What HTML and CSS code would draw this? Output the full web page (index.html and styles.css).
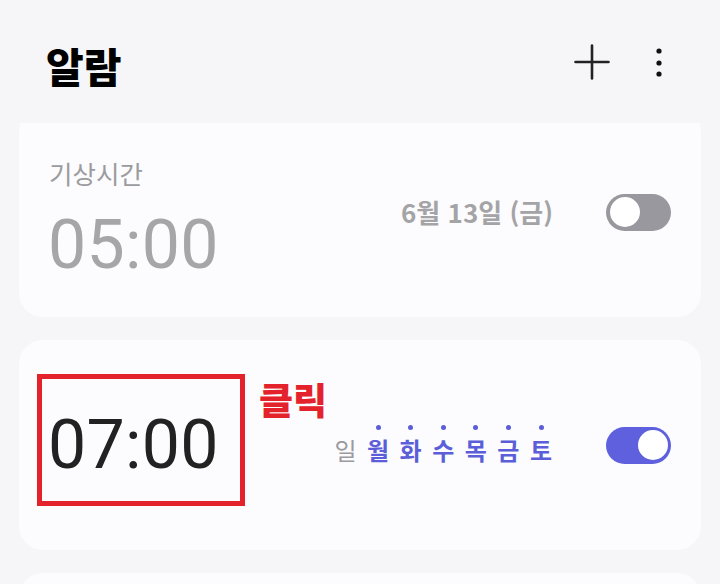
FILE: index.html
```html
<!DOCTYPE html>
<html lang="ko">
<head>
<meta charset="utf-8">
<title>알람</title>
<link rel="stylesheet" href="styles.css">
</head>
<body>
<div class="app">
  <header class="top">
    <h1 class="title">알람</h1>
    <div class="actions">
      <svg class="icon-plus" width="36" height="36" viewBox="0 0 36 36" aria-label="추가">
        <path d="M18 1.5V34.5M1.5 18H34.5" stroke="#222" stroke-width="2.6" stroke-linecap="round" fill="none"/>
      </svg>
      <svg class="icon-more" width="24" height="32" viewBox="0 0 24 32" aria-label="더보기">
        <circle cx="12" cy="5" r="2.6" fill="#111"/>
        <circle cx="12" cy="17" r="2.6" fill="#111"/>
        <circle cx="12" cy="28" r="2.6" fill="#111"/>
      </svg>
    </div>
  </header>
  <main class="list">
    <div class="list-inner">
      <section class="card card-off">
        <div class="info">
          <div class="label">기상시간</div>
          <div class="time muted">05:00</div>
        </div>
        <div class="side">
          <div class="date">6월 13일 (금)</div>
          <div class="toggle off"><span class="knob"></span></div>
        </div>
      </section>
      <section class="card card-on">
        <div class="info">
          <div class="time">07:00</div>
        </div>
        <div class="side">
          <div class="days">
            <span class="day"><i class="dot hidden"></i><b class="ch off">일</b></span>
            <span class="day"><i class="dot"></i><b class="ch">월</b></span>
            <span class="day"><i class="dot"></i><b class="ch">화</b></span>
            <span class="day"><i class="dot"></i><b class="ch">수</b></span>
            <span class="day"><i class="dot"></i><b class="ch">목</b></span>
            <span class="day"><i class="dot"></i><b class="ch">금</b></span>
            <span class="day"><i class="dot"></i><b class="ch">토</b></span>
          </div>
          <div class="toggle on"><span class="knob"></span></div>
        </div>
        <div class="highlight"></div>
        <div class="click-note">클릭</div>
      </section>
      <section class="card"></section>
    </div>
  </main>
</div>
</body>
</html>
```

FILE: styles.css
```css
html, body {
  margin: 0;
  padding: 0;
}
body {
  background: #f6f6f8;
  font-family: "Noto Sans CJK KR", "Noto Sans", sans-serif;
}
.app {
  width: 720px;
  height: 584px;
  overflow: hidden;
  display: flex;
  flex-direction: column;
}
.top {
  height: 123px;
  flex: none;
  box-sizing: border-box;
  padding: 45px 49px 0 46px;
  display: flex;
  justify-content: space-between;
  align-items: flex-start;
}
.title {
  margin: 0;
  font-size: 41px;
  line-height: 41px;
  font-weight: 900;
  color: #000;
}
.actions {
  height: 32px;
  margin-top: 1px;
  display: flex;
  align-items: center;
  gap: 37px;
}
.actions svg {
  display: block;
  flex: none;
}
.list {
  flex: 1;
  overflow: hidden;
}
.list-inner {
  margin-top: -16px;
  padding: 0 19px;
  display: flex;
  flex-direction: column;
  gap: 23px;
}
.card {
  position: relative;
  height: 210px;
  flex: none;
  box-sizing: border-box;
  border-radius: 24px;
  background: #fcfcfe;
  padding: 0 30px 0 29px;
  display: flex;
  align-items: center;
  justify-content: space-between;
}
.card-off .info {
  align-self: flex-start;
  padding-top: 53px;
}
.label {
  font-size: 25.5px;
  line-height: 25px;
  color: #9b9b9d;
  margin-bottom: 26px;
  margin-left: 1px;
}
.time {
  font-family: Roboto, "Liberation Sans", sans-serif;
  font-size: 68px;
  line-height: 68px;
  font-weight: 400;
  color: #222;
  letter-spacing: 0.3px;
}
.time.muted {
  color: #a6a6a8;
}
.side {
  display: flex;
  align-items: center;
  gap: 53px;
}
.date {
  font-size: 26px;
  line-height: 26px;
  font-weight: 700;
  color: #a4a4a6;
}
.toggle {
  width: 65px;
  height: 37px;
  border-radius: 19px;
  box-sizing: border-box;
  padding: 3.5px 4px;
  display: flex;
  align-items: center;
}
.toggle.off {
  background: #98989e;
  justify-content: flex-start;
}
.toggle.on {
  background: #5e60de;
  justify-content: flex-end;
  padding: 3px 3px;
}
.knob {
  width: 30px;
  height: 30px;
  border-radius: 50%;
  background: #fff;
}
.days {
  display: flex;
  gap: 8.6px;
  margin-top: -3px;
}
.day {
  display: flex;
  flex-direction: column;
  align-items: center;
  width: 24px;
}
.dot {
  width: 5px;
  height: 5px;
  border-radius: 50%;
  background: #5b5ed8;
  margin-bottom: 8px;
}
.dot.hidden {
  visibility: hidden;
}
.ch {
  font-size: 24px;
  line-height: 24px;
  font-weight: 700;
  color: #5b5ed8;
}
.ch.off {
  font-weight: 400;
  color: #9b9b9d;
}
.highlight {
  position: absolute;
  left: 18px;
  top: 34px;
  width: 208px;
  height: 132px;
  box-sizing: border-box;
  border: 5px solid #e4222b;
}
.click-note {
  position: absolute;
  left: 240px;
  top: 41px;
  font-size: 37px;
  line-height: 37px;
  font-weight: 900;
  color: #e4222b;
}
```
